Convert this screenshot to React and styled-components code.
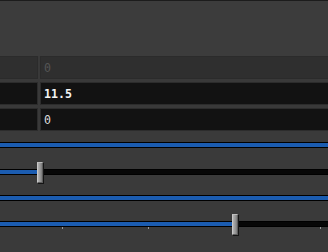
import React from "react";
import styled, { createGlobalStyle } from "styled-components";

const Global = createGlobalStyle`
  html, body { margin: 0; padding: 0; background: #3a3a3a; }
  body { font-family: "DejaVu Sans Mono", "Liberation Mono", monospace; overflow: hidden; }
`;

const Page = styled.div`
  width: 328px;
  height: 252px;
  display: flex;
  flex-direction: column;
  background: #3a3a3a;
  overflow: hidden;
`;

const Header = styled.div`
  height: 55px;
  flex: none;
  border-top: 1px solid #1c1c1c;
  background: #3c3c3c;
`;

const Table = styled.div`
  display: flex;
  flex-direction: column;
  gap: 3px;
  background: #393939;
  flex: none;
`;

const Row = styled.div`
  display: grid;
  grid-template-columns: 38px 1fr;
  column-gap: 2px;
  height: 23px;
`;

const Cell = styled.div`
  box-sizing: border-box;
  border: 1px solid ${(p) => (p.$muted ? "#2b2b2b" : "#2c2c2c")};
  background: ${(p) => (p.$muted ? "#2f2f2f" : "#121212")};
  display: flex;
  align-items: center;
  padding-left: 3px;
  font-size: 11.6px;
  font-weight: ${(p) => (p.$bold ? 700 : 400)};
  color: ${(p) => (p.$muted ? "#555555" : p.$bold ? "#f4f4f4" : "#dcdcdc")};
  margin-left: ${(p) => (p.$first ? "-2px" : "0")};
  margin-right: ${(p) => (p.$last ? "-2px" : "0")};
`;

const Sliders = styled.div`
  display: grid;
  grid-template-rows: 27px 26px 26px 26px;
  padding-top: 11px;
`;

const SliderRow = styled.div`
  position: relative;
  height: 26px;
`;

const Track = styled.div`
  position: relative;
  height: 4px;
  border-top: 1px solid #000;
  border-bottom: 1px solid #000;
  background: #070707;
  margin-left: -2px;
  margin-right: -2px;
`;

const Fill = styled.div`
  height: 100%;
  background: #1b5cb0;
`;

const Thumb = styled.div`
  position: absolute;
  top: -8px;
  width: 4px;
  height: 19px;
  border: 1px solid #5c5c5c;
  border-left-color: #c8c8c8;
  border-top-color: #bdbdbd;
  background: linear-gradient(to right, #b4b4b4, #949494 60%, #7a7a7a);
  box-shadow: 1px 1px 0 #141414;
`;

const Tick = styled.div`
  position: absolute;
  top: 6px;
  width: 1px;
  height: 2px;
  background: #9a9a9a;
`;

function Slider({ value, ticks }) {
  return (
    <SliderRow>
      <Track>
        <Fill style={{ width: value == null ? "100%" : `${value + 2}px` }} />
        {value != null && <Thumb style={{ left: `${value + 2}px` }} />}
      </Track>
      {ticks && ticks.map((t) => <Tick key={t} style={{ left: `${t}px` }} />)}
    </SliderRow>
  );
}

export default function App() {
  return (
    <Page>
      <Global />
      <Header />
      <Table>
        <Row>
          <Cell $muted $first />
          <Cell $muted $last>0</Cell>
        </Row>
        <Row>
          <Cell $first />
          <Cell $bold $last>11.5</Cell>
        </Row>
        <Row>
          <Cell $first />
          <Cell $last>0</Cell>
        </Row>
      </Table>
      <Sliders>
        <Slider />
        <Slider value={37} />
        <Slider />
        <Slider value={232} ticks={[62, 148, 320]} />
      </Sliders>
    </Page>
  );
}
